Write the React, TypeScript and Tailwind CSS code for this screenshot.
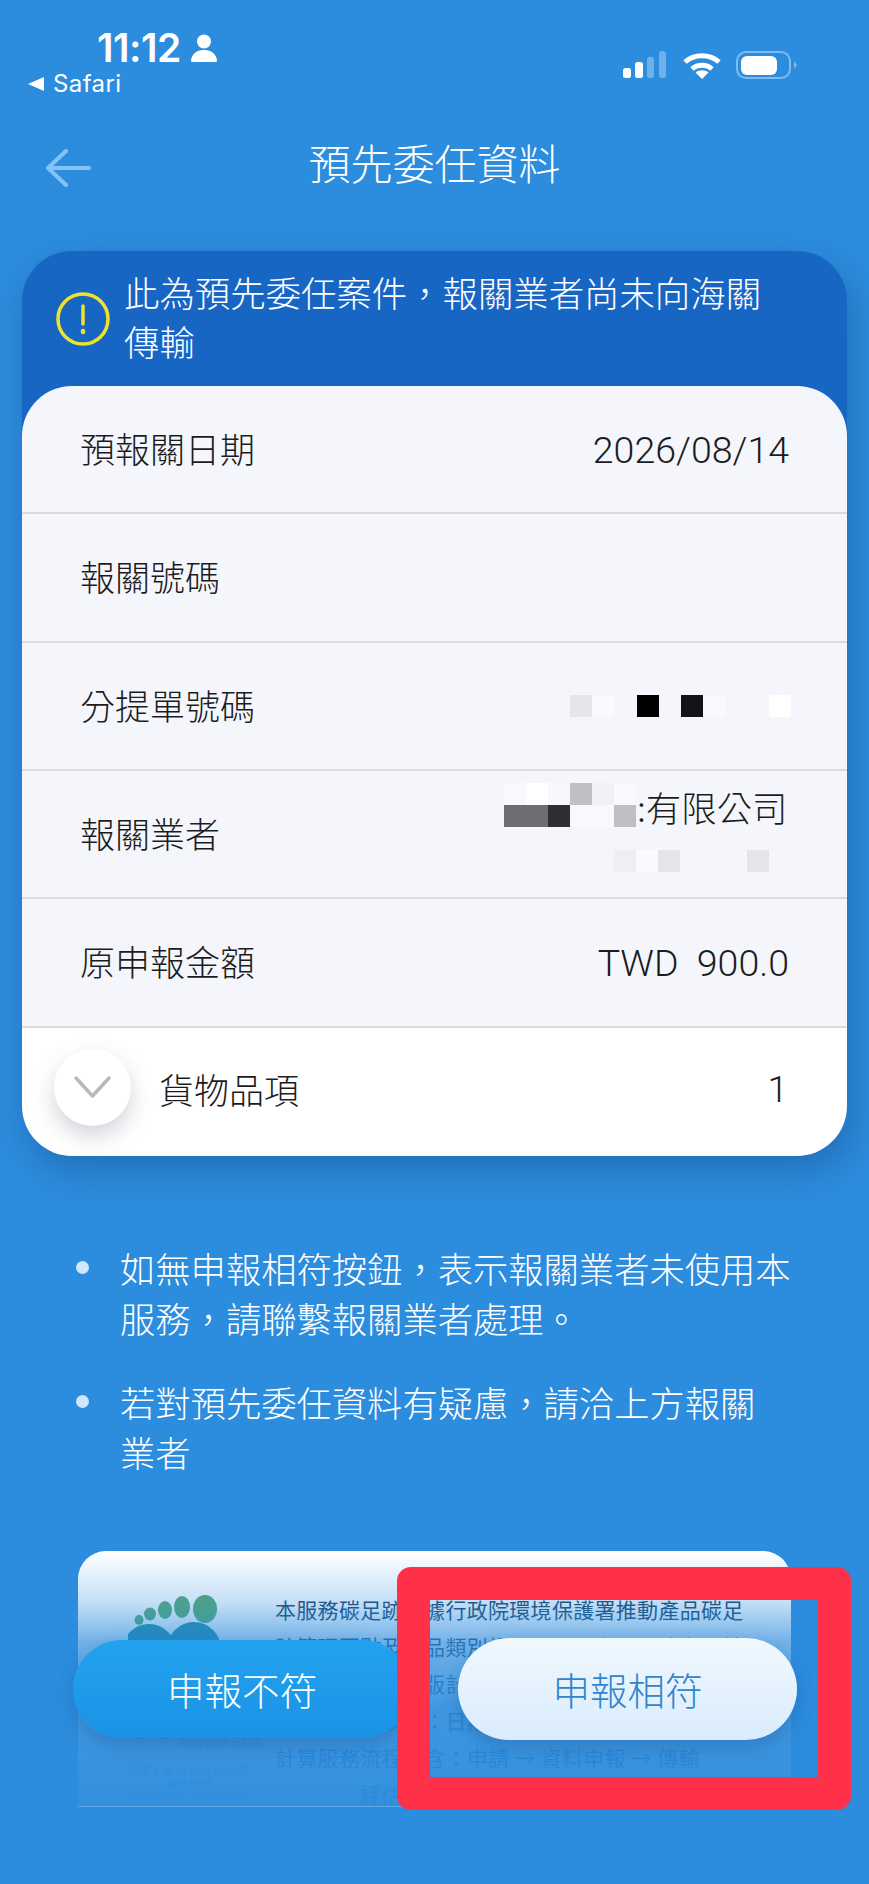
const cjk = "font-['Noto_Sans_CJK_TC',sans-serif]";

const mosaic: [number, number, string][] = [
  [504, 783, "bg-[#f8f9fc]"],
  [526, 783, "bg-[#ffffff]"],
  [548, 783, "bg-[#f7f8fc]"],
  [570, 783, "bg-[#c0c0c4]"],
  [592, 783, "bg-[#f0f1f5]"],
  [614, 783, "bg-[#f9fafd]"],
  [504, 805, "bg-[#6e6e72]"],
  [526, 805, "bg-[#6e6e72]"],
  [548, 805, "bg-[#2f2f33]"],
  [570, 805, "bg-[#f8f9fc]"],
  [592, 805, "bg-[#f8f9fc]"],
  [614, 805, "bg-[#c0c0c4]"],
  [614, 850, "bg-[#eeeff3]"],
  [636, 850, "bg-[#fafafd]"],
  [658, 850, "bg-[#e4e5ea]"],
  [747, 850, "bg-[#e4e5ea]"],
  [570, 695, "bg-[#e5e6ea]"],
  [592, 695, "bg-[#fafafc]"],
  [637, 695, "bg-[#000000]"],
  [681, 695, "bg-[#141416]"],
  [703, 695, "bg-[#fafafd]"],
  [769, 695, "bg-[#ffffff]"],
];

function StatusBar() {
  return (
    <div className="h-[128px] relative text-white font-['Inter',sans-serif]">
      <div className="flex items-center pl-[97px] pt-[26px] gap-[10px]">
        <span className="text-[39px] leading-[44px] font-semibold tracking-[-0.5px]">11:12</span>
        <svg width="26" height="28" viewBox="0 0 26 28" fill="white">
          <circle cx="13" cy="7.5" r="7" />
          <path d="M1 28c-1.5 0-1-2.500-.5-4C2.500 18.500 7 16 13 16s10.500 2.500 12.500 8c.5 1.500 1 4-.5 4z" />
        </svg>
      </div>
      <div className="flex items-center pl-[28px] gap-[9px]">
        <svg width="16" height="14" viewBox="0 0 16 14" fill="white">
          <polygon points="16,0 16,14 0,7" />
        </svg>
        <span className="text-[24px] leading-[28px] tracking-[0.4px]">Safari</span>
      </div>
      <div className="absolute left-[623px] top-[51px] flex items-center">
        <svg width="44" height="28" viewBox="0 0 44 28">
          <rect x="0" y="17" width="8" height="10" rx="2.500" fill="white" />
          <rect x="12" y="11" width="8" height="16" rx="2.500" fill="white" />
          <rect x="24" y="6" width="7" height="21" rx="2.500" fill="#6fb0ea" />
          <rect x="36" y="0" width="7" height="27" rx="2.500" fill="#6fb0ea" />
        </svg>
        <svg className="ml-[16px]" width="38" height="28" viewBox="0 0 38 28" fill="none" stroke="white" strokeWidth="5">
          <path d="M2 11C11 2.500 27 2.500 36 11" />
          <path d="M9 18c5.500-5 14.500-5 20 0" />
          <path fill="white" stroke="none" d="M12.500 21.500c3.500-3 9.500-3 13 0L19 28z" />
        </svg>
        <div className="ml-[15px] w-[55px] h-[28px] border-2 border-[#7dbcf0] rounded-[10px] p-[2.500px] flex">
          <div className="w-[36px] h-full bg-white rounded-[6px]" />
        </div>
        <div className="ml-[3px] w-0 h-0 border-y-[4px] border-y-transparent border-l-[3px] border-l-[#7dbcf0]" />
      </div>
    </div>
  );
}

function Row({ label, value }: { label: string; value?: string }) {
  return (
    <div className="h-[128.33px] flex items-center justify-between pl-[58px] pr-[58px] pb-[2px] bg-[#f4f6fb] border-b-2 border-[#d9dbe1] text-[35px] text-[#1c1c1e] font-light">
      <span>{label}</span>
      {value && <span className="mt-[4px] font-['Roboto',sans-serif] font-light text-[37.500px] whitespace-pre">{value}</span>}
    </div>
  );
}

function AdCard() {
  return (
    <div className="mt-[74px] mx-[78px] h-[256px] relative overflow-hidden rounded-t-[28px] bg-white border-b border-[#5aa8ea] flex">
      <div className="w-[197px] shrink-0 flex flex-col items-center text-[#1d5f94]">
        <svg className="mt-[38px] ml-[32px]" width="130" height="150" viewBox="0 0 130 150">
          <g fill="#57a96c">
            <ellipse cx="11" cy="31" rx="4.500" ry="5" />
            <ellipse cx="22" cy="25" rx="6" ry="6.500" />
            <ellipse cx="37" cy="21" rx="7" ry="9" />
            <ellipse cx="54" cy="18" rx="8" ry="11" />
            <ellipse cx="77" cy="20" rx="12" ry="14" />
          </g>
          <g fill="#1a8a99">
            <circle cx="21" cy="62" r="27" />
            <circle cx="66" cy="60" r="27" />
          </g>
          <ellipse cx="24" cy="135" rx="17" ry="20" fill="none" stroke="#1a8a99" strokeWidth="6" />
        </svg>
        <div className="absolute left-[100px] top-[182px] text-[15px] leading-[18px] font-bold opacity-50 font-['Liberation_Sans',sans-serif]">
          Taiwan EPA
        </div>
        <div className={`${cjk} text-[11px] leading-[13px] text-center mt-[25px] ml-[24px] opacity-60 text-[#21608f] whitespace-nowrap`}>
          <div>碳標字第 2416312003 號</div>
          <div>有效期限</div>
          <div>2024/01/01-2026/12/31</div>
        </div>
      </div>
      <div className={`${cjk} pt-[40px] text-[21px] leading-[37px] tracking-[0.3px] text-[#16456d] whitespace-nowrap`}>
        <div>本服務碳足跡依據行政院環境保護署推動產品碳足</div>
        <div>跡算理要點及產品類別規則，依上產周程式與系統</div>
        <div>產品類別規則第版計算結果</div>
        <div>本服務完成項目：日期</div>
        <div>計算服務流程包含：申請 → 資料申報 → 傳輸</div>
        <div className="pl-[85px]">評估</div>
      </div>
      <div className="absolute inset-0 bg-[linear-gradient(180deg,rgba(44,140,221,0)_0%,rgba(44,140,221,0.28)_20%,rgba(44,140,221,0.68)_36%,rgba(44,140,221,0.9)_62%,rgba(44,140,221,0.97)_100%)]" />
    </div>
  );
}

export default function App() {
  return (
    <div className={`${cjk} relative w-[869px] h-[1884px] overflow-hidden bg-[#2c8cdd] text-white`}>
      <StatusBar />

      <div className="h-[123px] relative flex items-start justify-center pt-[9px]">
        <svg className="absolute left-[46px] top-[21px]" width="45" height="38" viewBox="0 0 45 38" fill="none" stroke="#85c2f5" strokeWidth="4" strokeLinecap="round" strokeLinejoin="round">
          <path d="M43 19H3" />
          <path d="M20 2 2 19l18 17" />
        </svg>
        <h1 className="text-[42px] leading-[50px] font-light">預先委任資料</h1>
      </div>

      <div className="mx-[22px] rounded-[50px] bg-[#1866c4] shadow-[6px_14px_34px_rgba(20,70,130,0.4)]">
        <div className="h-[135px] flex items-start pl-[34px] gap-[14px] pt-[16px]">
          <svg width="54" height="54" viewBox="0 0 54 54" fill="none" stroke="#efe32a" strokeWidth="3.500" strokeLinecap="round" className="shrink-0 mt-[25px]">
            <circle cx="27" cy="27" r="25" />
            <path d="M27 14v18" />
            <path d="M27 39v1" strokeWidth="4.500" />
          </svg>
          <p className="w-[650px] text-[35.400px] leading-[49px] font-light">此為預先委任案件，報關業者尚未向海關傳輸</p>
        </div>
        <div className="rounded-[50px] overflow-hidden">
          <Row label="預報關日期" value="2026/08/14" />
          <Row label="報關號碼" />
          <Row label="分提單號碼" />
          <div className="h-[128.33px] relative flex items-center pl-[58px] pb-[2px] bg-[#f4f6fb] border-b-2 border-[#d9dbe1] text-[35px] text-[#1c1c1e] font-light">
            <span>報關業者</span>
            <span className="absolute left-[615px] top-[11px] leading-[50px] text-[35.400px] whitespace-pre">:有限公司</span>
          </div>
          <Row label="原申報金額" value="TWD  900.0" />
          <div className="h-[128px] flex items-center bg-white pl-[32px] pr-[59px] pb-[4px] text-[35px] text-[#1c1c1e] font-light">
            <div className="w-[77px] h-[77px] mb-[5px] rounded-full bg-white shadow-[0_10px_22px_rgba(90,100,120,0.28)] flex items-center justify-center">
              <svg width="37" height="22" viewBox="0 0 37 22" fill="none" stroke="#b9b9b9" strokeWidth="3.500" strokeLinecap="round" strokeLinejoin="round">
                <path d="M2 2l16.500 18L35 2" />
              </svg>
            </div>
            <span className="ml-[28px]">貨物品項</span>
            <span className="ml-auto font-['Roboto',sans-serif] text-[37px]">1</span>
          </div>
        </div>
      </div>

      <ul className="mt-[87px] pl-[76px] flex flex-col gap-[34px] text-[35.300px] leading-[50px] font-light">
        <li className="flex gap-[31px]">
          <span className="mt-[18px] w-[13px] h-[13px] rounded-full bg-[#cfe6fb] shrink-0" />
          <span className="w-[680px]">如無申報相符按鈕，表示報關業者未使用本服務，請聯繫報關業者處理。</span>
        </li>
        <li className="flex gap-[31px]">
          <span className="mt-[18px] w-[13px] h-[13px] rounded-full bg-[#cfe6fb] shrink-0" />
          <span className="w-[650px]">若對預先委任資料有疑慮，請洽上方報關業者</span>
        </li>
      </ul>

      <AdCard />

      <button className="absolute left-[73px] top-[1640px] w-[338px] h-[98px] rounded-full bg-gradient-to-b from-[#23a2ef] to-[#1a93e5] shadow-[0_8px_18px_rgba(20,80,140,0.3)] text-[37.500px] font-light text-white">
        申報不符
      </button>
      <button className="absolute left-[458px] top-[1638px] w-[339px] h-[102px] rounded-full bg-gradient-to-b from-[#f1f8fd] to-[#d9ecfd] shadow-[0_8px_18px_rgba(20,80,140,0.3)] text-[37.500px] font-light text-[#2f85cf]">
        申報相符
      </button>

      {/* red annotation on top of the screenshot */}
      <div className="absolute left-[397px] top-[1567px] w-[454px] h-[243px] border-[33px] border-[#fe3149] rounded-[14px]" />

      {/* pixelated redaction blocks */}
      {mosaic.map(([x, y, color]) => (
        <div key={`${x}-${y}`} className={`absolute w-[22px] h-[22px] ${color}`} style={{ left: x, top: y }} />
      ))}
    </div>
  );
}
